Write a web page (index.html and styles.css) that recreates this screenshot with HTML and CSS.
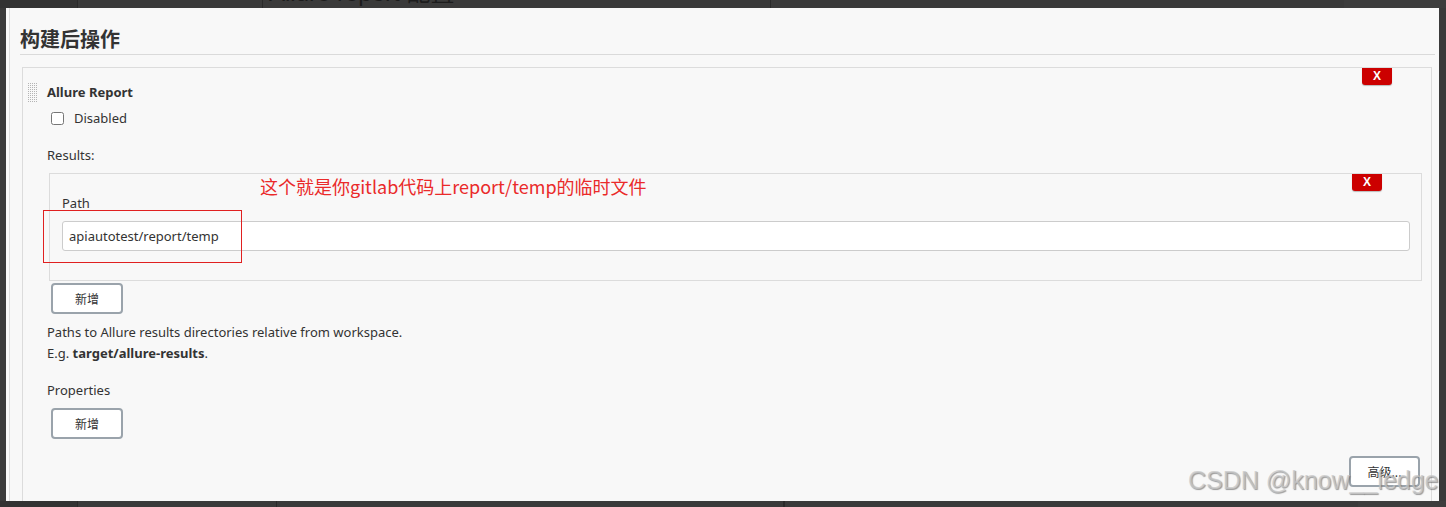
FILE: index.html
```html
<!DOCTYPE html>
<html lang="zh">
<head>
<meta charset="utf-8">
<title>构建后操作</title>
<link rel="stylesheet" href="styles.css">
</head>
<body>
<div class="strip strip-top">
  <div class="col col-a"></div>
  <div class="col col-b"></div>
  <div class="col col-c"><span class="behind-title">Allure report 配置</span></div>
  <div class="col col-d"></div>
  <div class="col col-e"></div>
</div>
<div class="panel">
  <div class="inner">
    <h2 class="heading">构建后操作</h2>
    <div class="step">
      <button class="del del-step">X</button>
      <div class="title-row">
        <span class="grip"></span>
        <span class="title">Allure Report</span>
      </div>
      <label class="check-row"><input type="checkbox" class="check"><span>Disabled</span></label>
      <div class="label results">Results:</div>
      <div class="repeat">
        <button class="del del-item">X</button>
        <div class="label path">Path</div>
        <input class="text" type="text" value="apiautotest/report/temp">
      </div>
      <button class="btn add-1">新增</button>
      <div class="help">
        <div>Paths to Allure results directories relative from workspace.</div>
        <div>E.g. <b>target/allure-results</b>.</div>
      </div>
      <div class="label props">Properties</div>
      <button class="btn add-2">新增</button>
      <div class="adv-row"><button class="btn adv">高级...</button></div>
    </div>
  </div>
  <div class="note-box"></div>
  <div class="note-text">这个就是你gitlab代码上report/temp的临时文件</div>
</div>
<div class="strip strip-bottom">
  <div class="col col-a"></div>
  <div class="col col-b"></div>
  <div class="col col-c2"></div>
  <div class="col col-d"></div>
  <div class="col col-e"></div>
</div>
<div class="watermark">CSDN @know__ledge</div>
</body>
</html>
```

FILE: styles.css
```css
html, body {
  margin: 0;
  padding: 0;
}
body {
  background: #3a3a3a;
  width: 1446px;
  height: 507px;
  overflow: hidden;
  position: relative;
  font-family: "Noto Sans", "Noto Sans CJK SC", sans-serif;
  font-size: 13px;
  color: #333;
}
.strip {
  display: flex;
  height: 8px;
  overflow: hidden;
}
.strip-bottom {
  height: 6px;
}
.col {
  height: 100%;
  box-sizing: border-box;
}
.col-a {
  width: 77px;
  background: #333;
}
.col-b {
  width: 185px;
  border-left: 1px solid #2a2a2a;
}
.col-c {
  width: 508px;
  border-left: 1px solid #2a2a2a;
  position: relative;
}
.col-c2 {
  width: 508px;
  border-left: 1px solid #2a2a2a;
  border-right: 1px solid #2a2a2a;
  margin-left: 14px;
}
.col-d {
  width: 574px;
  border-left: 1px solid #2a2a2a;
}
.col-e {
  flex: 1;
  background: #3d3d3d;
}
.behind-title {
  display: block;
  margin: -19px 0 0 6px;
  font-family: "Liberation Sans", "Noto Sans CJK SC", sans-serif;
  font-size: 24px;
  line-height: 24px;
  color: #1c1c1c;
  white-space: nowrap;
}

.panel {
  position: relative;
  margin: 0 7px 0 6px;
  height: 493px;
  background: #f8f8f8;
  padding-left: 3px;
  box-sizing: border-box;
  overflow: hidden;
}
.inner {
  height: 100%;
  border-left: 1px solid #dcdcdc;
  padding: 18px 4px 0 10px;
  box-sizing: border-box;
}
.heading {
  margin: 0;
  font-size: 20px;
  font-weight: bold;
  line-height: 28px;
  height: 28px;
  border-bottom: 1px solid #dadada;
  color: #333;
}
.step {
  position: relative;
  margin: 12px 3px 0 2px;
  border: 1px solid #dcdcdc;
  padding: 0 0 0 24px;
  height: 460px;
}
.del {
  position: absolute;
  top: 0;
  width: 30px;
  height: 17px;
  padding: 0;
  border: none;
  border-radius: 0 0 3px 3px;
  background: #cc0000;
  color: #fff;
  font-family: "Liberation Sans", sans-serif;
  font-weight: bold;
  font-size: 12px;
  line-height: 17px;
  text-align: center;
  box-shadow: 0 1px 1px rgba(0,0,0,0.25);
}
.del-step {
  right: 39px;
}
.del-item {
  right: 39px;
}
.title-row {
  display: flex;
  align-items: center;
  gap: 9px;
  margin: 14px 0 0 -20px;
  height: 20px;
}
.grip {
  width: 11px;
  height: 20px;
  background-image:
    linear-gradient(90deg, #f8f8f8 50%, transparent 50%),
    linear-gradient(#f8f8f8 50%, #b4b4b4 50%);
  background-size: 2px 2px, 2px 2px;
}
.title {
  font-weight: bold;
  line-height: 20px;
}
.check-row {
  display: flex;
  align-items: center;
  margin-top: 6px;
  height: 20px;
}
.check {
  margin: 0 10px 0 4px;
  width: 13px;
  height: 13px;
}
.label {
  line-height: 20px;
}
.results {
  margin-top: 17px;
}
.repeat {
  position: relative;
  margin: 8px 9px 0 2px;
  border: 1px solid #dcdcdc;
  padding: 19px 11px 29px 12px;
}
.text {
  display: block;
  box-sizing: border-box;
  width: 100%;
  height: 30px;
  margin-top: 8px;
  padding: 0 6px;
  border: 1px solid #ccc;
  border-radius: 3px;
  background: #fff;
  font-family: "Noto Sans", "Noto Sans CJK SC", sans-serif;
  font-size: 13px;
  color: #333;
}
.btn {
  display: block;
  width: 72px;
  height: 31px;
  padding: 0;
  background: #fff;
  border: 2px solid #9aa3ab;
  border-radius: 4px;
  font-family: "Noto Sans CJK SC", sans-serif;
  font-size: 12px;
  color: #333;
}
.add-1 {
  margin: 2px 0 0 4px;
}
.help {
  margin-top: 8px;
  line-height: 21px;
}
.props {
  margin-top: 16px;
}
.add-2 {
  margin: 8px 0 0 4px;
}
.adv-row {
  display: flex;
  justify-content: flex-end;
  margin: 17px 11px 0 0;
}
.adv {
  width: 71px;
}
.note-box {
  position: absolute;
  left: 37px;
  top: 202px;
  width: 197px;
  height: 51px;
  border: 1px solid #e02020;
}
.note-text {
  position: absolute;
  left: 254px;
  top: 165px;
  font-family: "Noto Sans CJK SC", sans-serif;
  font-size: 18px;
  line-height: 26px;
  color: #ea2a2a;
  white-space: nowrap;
}
.watermark {
  position: absolute;
  left: 1188px;
  top: 464px;
  font-family: "Liberation Sans", sans-serif;
  font-size: 25px;
  line-height: 32px;
  color: rgba(200, 200, 200, 0.75);
  text-shadow: 1px 1px 1px rgba(90, 90, 90, 0.6);
  white-space: nowrap;
}
```
